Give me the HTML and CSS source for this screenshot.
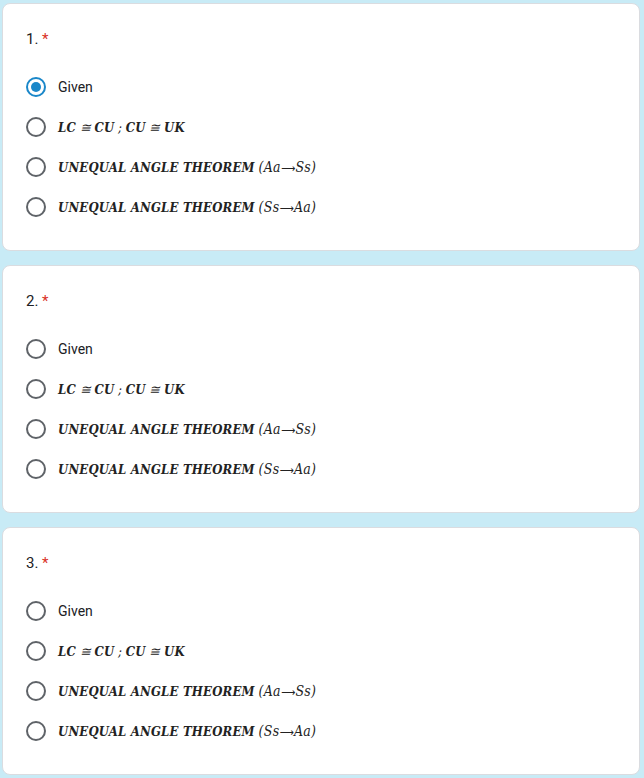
FILE: index.html
```html
<!DOCTYPE html>
<html lang="en">
<head>
<meta charset="UTF-8">
<meta name="viewport" content="width=device-width, initial-scale=1.0">
<title>Quiz</title>
<link rel="stylesheet" href="styles.css">
</head>
<body>
  <div class="page">

    <div class="card">
      <div class="question">1. <span class="req">*</span></div>
      <div class="options">
        <label class="option"><span class="radio checked"></span><span class="text">Given</span></label>
        <label class="option"><span class="radio"></span><span class="math"><b>LC</b> ≅ <b>CU</b> ; <b>CU</b> ≅ <b>UK</b></span></label>
        <label class="option"><span class="radio"></span><span class="math"><b>UNEQUAL ANGLE THEOREM</b> <span class="paren">(<i>Aa</i><span class="arrow">⟶</span><i>Ss</i>)</span></span></label>
        <label class="option"><span class="radio"></span><span class="math"><b>UNEQUAL ANGLE THEOREM</b> <span class="paren">(<i>Ss</i><span class="arrow">⟶</span><i>Aa</i>)</span></span></label>
      </div>
    </div>

    <div class="card">
      <div class="question">2. <span class="req">*</span></div>
      <div class="options">
        <label class="option"><span class="radio"></span><span class="text">Given</span></label>
        <label class="option"><span class="radio"></span><span class="math"><b>LC</b> ≅ <b>CU</b> ; <b>CU</b> ≅ <b>UK</b></span></label>
        <label class="option"><span class="radio"></span><span class="math"><b>UNEQUAL ANGLE THEOREM</b> <span class="paren">(<i>Aa</i><span class="arrow">⟶</span><i>Ss</i>)</span></span></label>
        <label class="option"><span class="radio"></span><span class="math"><b>UNEQUAL ANGLE THEOREM</b> <span class="paren">(<i>Ss</i><span class="arrow">⟶</span><i>Aa</i>)</span></span></label>
      </div>
    </div>

    <div class="card">
      <div class="question">3. <span class="req">*</span></div>
      <div class="options">
        <label class="option"><span class="radio"></span><span class="text">Given</span></label>
        <label class="option"><span class="radio"></span><span class="math"><b>LC</b> ≅ <b>CU</b> ; <b>CU</b> ≅ <b>UK</b></span></label>
        <label class="option"><span class="radio"></span><span class="math"><b>UNEQUAL ANGLE THEOREM</b> <span class="paren">(<i>Aa</i><span class="arrow">⟶</span><i>Ss</i>)</span></span></label>
        <label class="option"><span class="radio"></span><span class="math"><b>UNEQUAL ANGLE THEOREM</b> <span class="paren">(<i>Ss</i><span class="arrow">⟶</span><i>Aa</i>)</span></span></label>
      </div>
    </div>

  </div>
</body>
</html>
```

FILE: styles.css
```css
body {
  margin: 0;
  background-color: #c8ebf6;
  font-family: Roboto, "Liberation Sans", Arial, sans-serif;
  color: #202124;
}
.page {
  display: flex;
  flex-direction: column;
  gap: 14px;
  padding: 3px 4px 3px 2px;
}
.card {
  background-color: #fff;
  border: 1px solid #dadce0;
  border-radius: 8px;
  padding: 23px 23px 23px;
}
.question {
  font-size: 15px;
  line-height: 24px;
  height: 24px;
  margin-bottom: 16px;
}
.req {
  color: #d93025;
}
.options {
  display: flex;
  flex-direction: column;
}
.option {
  display: flex;
  align-items: center;
  gap: 12px;
  height: 40px;
}
.radio {
  box-sizing: border-box;
  width: 20px;
  height: 20px;
  border: 2px solid #5f6368;
  border-radius: 50%;
  display: flex;
  align-items: center;
  justify-content: center;
  flex-shrink: 0;
}
.radio.checked {
  border-color: #1a87c9;
}
.radio.checked::after {
  content: "";
  width: 10px;
  height: 10px;
  border-radius: 50%;
  background-color: #1a87c9;
}
.text {
  font-size: 14px;
}
.math {
  font-family: "DejaVu Serif Condensed", "DejaVu Serif", serif;
  font-stretch: condensed;
  font-style: italic;
  font-size: 13px;
  color: #222;
}
.math b {
  letter-spacing: 0.2px;
}
.paren {
  font-size: 14px;
  letter-spacing: 0.3px;
}
.arrow {
  font-family: "DejaVu Sans", sans-serif;
  font-style: normal;
  font-size: 11px;
}
```
